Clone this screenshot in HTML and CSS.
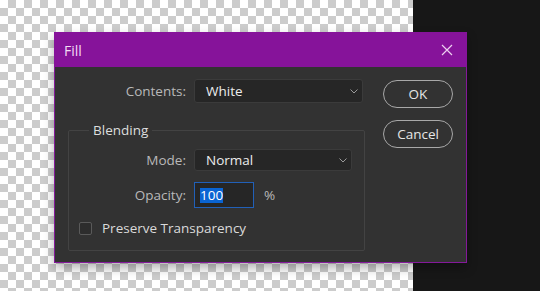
FILE: index.html
```html
<!DOCTYPE html>
<html>
<head>
<meta charset="utf-8">
<link rel="stylesheet" href="styles.css">
</head>
<body>
<div class="stage">
  <div class="canvas"></div>
  <div class="panel"></div>
  <div class="dialog">
    <div class="titlebar">
      <span class="title">Fill</span>
      <svg class="close" width="12" height="12" viewBox="0 0 12 12"><path d="M1 1L11 11M11 1L1 11" stroke="#ecd0ef" stroke-width="1.2" fill="none"/></svg>
    </div>
    <div class="body">
      <div class="main">
        <div class="row row-contents">
          <span class="label">Contents:</span>
          <div class="select select-contents"><span>White</span><svg class="chev" width="8" height="5" viewBox="0 0 8 5"><path d="M0.5 0.5L4 4L7.5 0.5" stroke="#9a9a9a" stroke-width="1" fill="none"/></svg></div>
        </div>
        <fieldset class="group">
          <legend>Blending</legend>
          <div class="row row-mode">
            <span class="label">Mode:</span>
            <div class="select select-mode"><span>Normal</span><svg class="chev" width="8" height="5" viewBox="0 0 8 5"><path d="M0.5 0.5L4 4L7.5 0.5" stroke="#9a9a9a" stroke-width="1" fill="none"/></svg></div>
          </div>
          <div class="row row-opacity">
            <span class="label">Opacity:</span>
            <div class="input"><span class="sel">100</span></div>
            <span class="pct">%</span>
          </div>
          <div class="check-row">
            <span class="checkbox"></span>
            <span class="check-label">Preserve Transparency</span>
          </div>
        </fieldset>
      </div>
      <div class="buttons">
        <div class="btn">OK</div>
        <div class="btn">Cancel</div>
      </div>
    </div>
  </div>
</div>
</body>
</html>
```

FILE: styles.css
```css
html, body {
  margin: 0;
  padding: 0;
}
body {
  font-family: "Open Sans", "Noto Sans", sans-serif;
  font-size: 13px;
}
.stage {
  position: relative;
  display: flex;
  width: 540px;
  height: 291px;
  overflow: hidden;
}
.canvas {
  width: 413px;
  background: repeating-conic-gradient(#cccccc 0 25%, #ffffff 0 50%) 0 0 / 16px 16px;
}
.panel {
  flex: 1;
  background: #171717;
}
.dialog {
  position: absolute;
  left: 54px;
  top: 32px;
  width: 413px;
  height: 231px;
  box-sizing: border-box;
  background: #323232;
  border: 1px solid #84199a;
  border-top: 0;
  box-shadow: 0 5px 10px rgba(0, 0, 0, 0.3);
  display: flex;
  flex-direction: column;
}
.titlebar {
  height: 35px;
  margin: 0 -1px;
  background: #86139a;
  display: flex;
  align-items: center;
  justify-content: space-between;
  padding: 0 14px 0 10px;
  flex-shrink: 0;
}
.title {
  color: #f2dcf4;
  font-size: 14px;
  margin-top: 1px;
}
.close {
  display: block;
  margin-top: 1px;
}
.body {
  display: flex;
  padding: 12px 0 0 13px;
}
.main {
  width: 297px;
}
.row {
  display: flex;
  align-items: center;
}
.label {
  color: #b9b9b9;
  font-size: 13.5px;
  text-align: right;
  margin-right: 8px;
}
.row-contents .label {
  width: 118px;
}
.group .label {
  width: 117px;
}
.select {
  box-sizing: border-box;
  background: #262626;
  border: 1px solid #3b3b3b;
  border-radius: 3px;
  display: flex;
  align-items: center;
  justify-content: space-between;
  padding: 0 4px 0 11px;
  color: #ececec;
  font-size: 13.5px;
}
.select-contents {
  width: 169px;
  height: 24px;
}
.select-mode {
  width: 158px;
  height: 22px;
}
.chev {
  display: block;
}
.group {
  margin: 18px 0 0 0;
  padding: 0 0 13px 0;
  border: 1px solid #434343;
  border-radius: 2px;
  min-width: 0;
}
.group legend {
  margin-left: 20px;
  padding: 0 4px;
  color: #dedede;
  font-size: 13.5px;
  line-height: 18px;
}
.row-mode {
  margin-top: 10px;
}
.row-opacity {
  margin-top: 11px;
}
.input {
  box-sizing: border-box;
  width: 60px;
  height: 26px;
  background: #262626;
  border: 1px solid #2160b8;
  display: flex;
  align-items: center;
  padding-left: 5px;
}
.sel {
  background: #0a64d2;
  color: #ffffff;
  font-size: 13.5px;
  line-height: 15px;
}
.pct {
  color: #b9b9b9;
  margin-left: 10px;
  font-size: 13.5px;
}
.check-row {
  display: flex;
  align-items: center;
  margin-top: 11px;
  padding-left: 10px;
}
.checkbox {
  box-sizing: border-box;
  width: 13px;
  height: 13px;
  border: 1px solid #5a5a5a;
  border-radius: 2px;
  background: #2d2d2d;
  margin-right: 10px;
}
.check-label {
  color: #dadada;
  font-size: 13.5px;
}
.buttons {
  margin-left: 18px;
  display: flex;
  flex-direction: column;
  gap: 12px;
  padding-top: 1px;
}
.btn {
  box-sizing: border-box;
  width: 70px;
  height: 28px;
  border: 1.5px solid #a8a8a8;
  border-radius: 14px;
  display: flex;
  align-items: center;
  justify-content: center;
  color: #e6e6e6;
  font-size: 13.5px;
}
```
